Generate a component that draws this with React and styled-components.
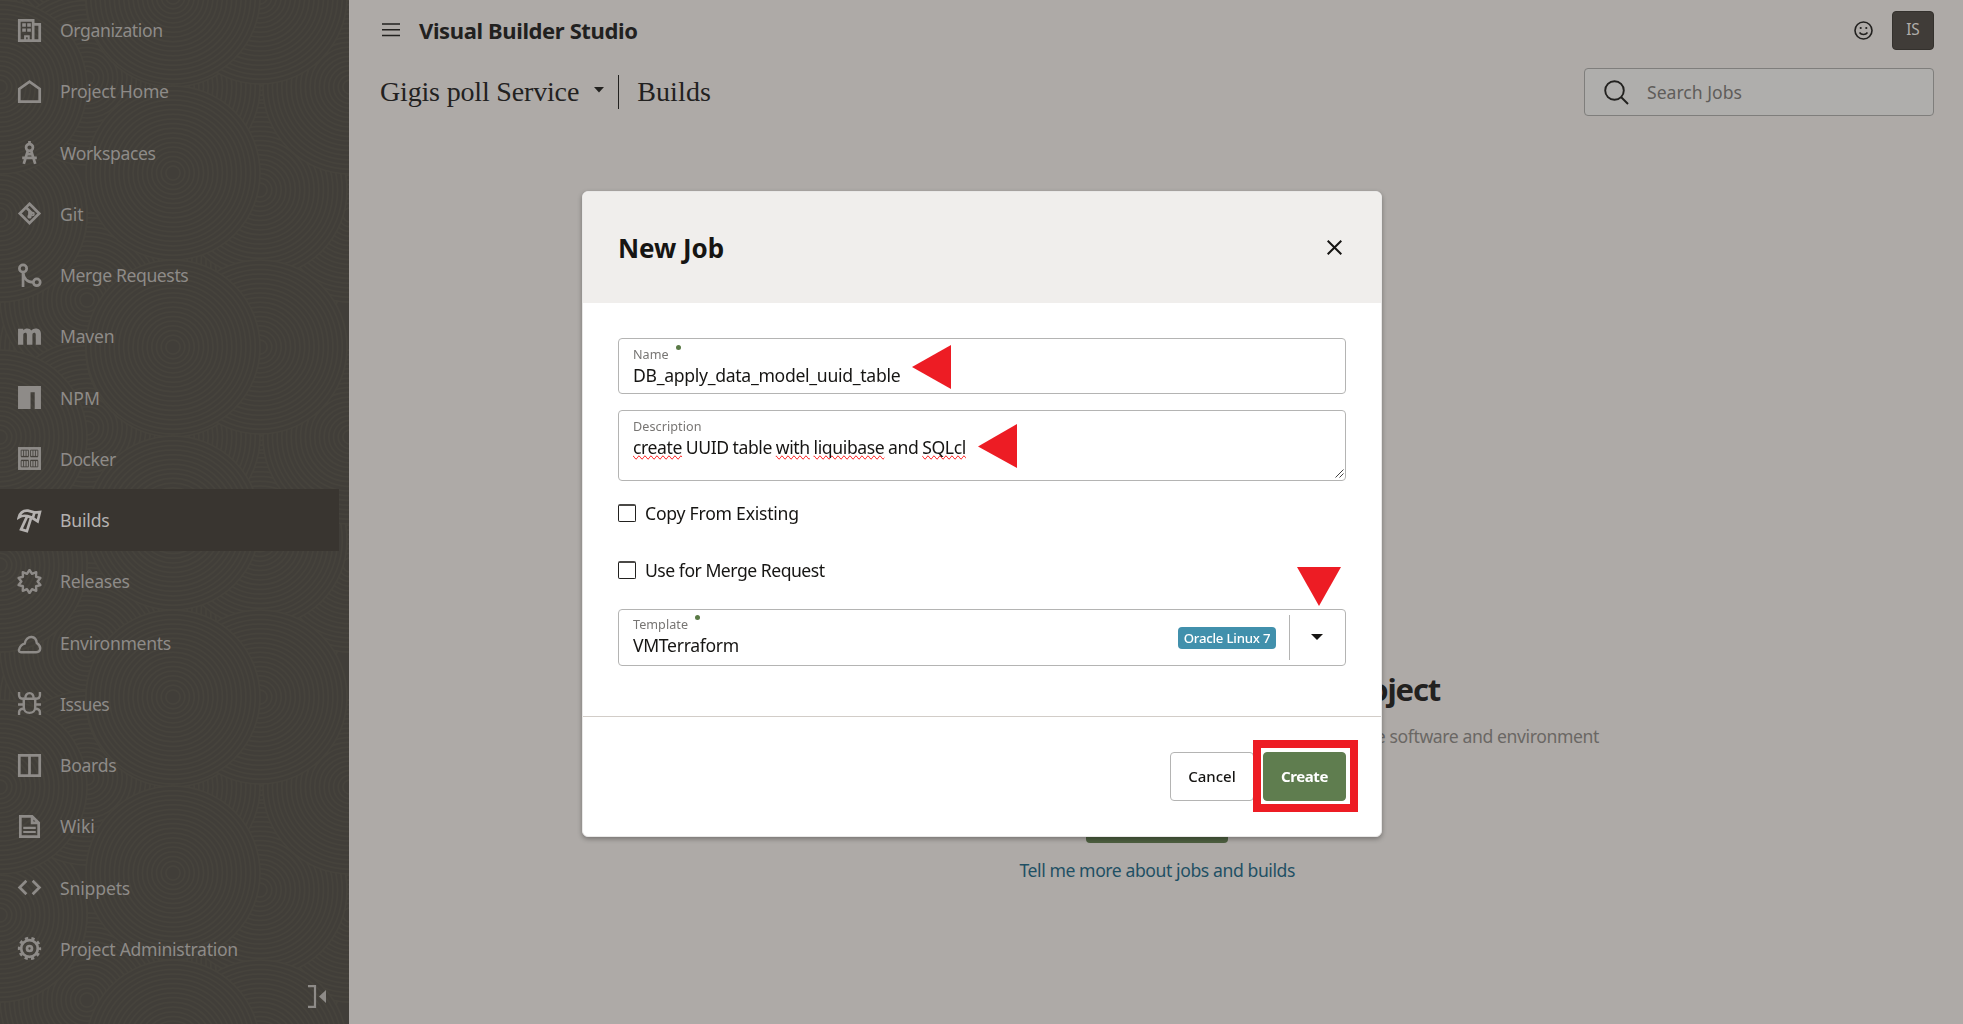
import React from "react";
import styled, { createGlobalStyle } from "styled-components";

const SANS = `"Noto Sans", "Open Sans", sans-serif`;
const SERIF = `"Liberation Serif", Georgia, serif`;

const GlobalStyle = createGlobalStyle`
  * { box-sizing: border-box; }
  html, body { margin: 0; height: 100%; }
  body { font-family: ${SANS}; font-size: 17.6px; background: #aeaaa7; overflow: hidden; }
`;

const Page = styled.div`
  display: flex;
  width: 100vw;
  height: 100vh;
`;

/* Text run with optional tracking */
const T = styled.span`
  letter-spacing: ${(p) => p.$ls || 0}px;
  word-spacing: ${(p) => p.$ws || 0}px;
  white-space: nowrap;
`;

/* ---------- Sidebar ---------- */
const Sidebar = styled.nav`
  position: relative;
  flex: 0 0 349px;
  height: 100%;
  background: #413e39;
  display: flex;
  flex-direction: column;
  overflow: hidden;
`;
const Pattern = styled.svg`
  position: absolute;
  inset: 0;
  width: 100%;
  height: 100%;
`;
const NavList = styled.div`
  display: flex;
  flex-direction: column;
  margin-top: -0.4px;
`;
const NavItem = styled.a`
  position: relative;
  flex: 0 0 61.24px;
  width: 339px;
  display: flex;
  align-items: center;
  gap: 18px;
  padding-left: 17px;
  color: ${(p) => (p.$active ? "#b5b2b0" : "#8e8b88")};
  background: ${(p) => (p.$active ? "#393530" : "transparent")};
  line-height: 24px;
`;
const NavIcon = styled.svg`
  width: 25px;
  height: 25px;
  flex: none;
  fill: none;
  stroke: currentColor;
  stroke-width: 2.6;
`;
const Collapse = styled.div`
  position: relative;
  display: flex;
  justify-content: flex-end;
  padding: 6px 23px 0 0;
  color: #8e8b88;
`;

/* ---------- Main ---------- */
const Main = styled.main`
  flex: 1;
  display: flex;
  flex-direction: column;
  color: #22211f;
`;
const TopBar = styled.header`
  display: flex;
  align-items: center;
  height: 60px;
  padding: 0 29px 0 33px;
`;
const Brand = styled.h1`
  flex: 1;
  margin: 0 0 0 19px;
  font-size: 22px;
  line-height: 30px;
  font-weight: 700;
`;
const Avatar = styled.div`
  width: 42px;
  height: 39px;
  margin-left: 19px;
  border-radius: 4px;
  background: #403c38;
  border: 1px solid #34312d;
  color: #b0adaa;
  font-size: 15.4px;
  display: flex;
  align-items: center;
  justify-content: center;
  padding-bottom: 2px;
`;
const SubBar = styled.div`
  display: flex;
  align-items: center;
  height: 64px;
  padding: 0 29px 0 31px;
`;
const Crumb = styled.div`
  font-family: ${SERIF};
  font-size: 28px;
  line-height: 34px;
  white-space: nowrap;
`;
const CrumbCaret = styled.svg`
  margin: -4px 0 0 14px;
  width: 12px;
  height: 6px;
`;
const CrumbRule = styled.div`
  width: 1px;
  height: 34px;
  margin: 0 18px 0 13px;
  background: #22211f;
`;
const Search = styled.div`
  margin-left: auto;
  width: 350px;
  height: 48px;
  border: 1px solid #7f7e7c;
  border-radius: 4px;
  background: #afaeac;
  display: flex;
  align-items: center;
  padding-left: 19px;
  gap: 18px;
  color: #5f5d5a;
`;
const Empty = styled.section`
  margin-top: 545px;
  width: 1250px;
  display: flex;
  flex-direction: column;
  align-items: flex-end;
`;
const EmptyTitle = styled.div`
  font-size: 31px;
  font-weight: 700;
  line-height: 40px;
  padding-right: 159px;
`;
const EmptyText = styled.div`
  line-height: 24px;
  margin-top: 15px;
  color: #6a6764;
`;
const EmptyButton = styled.div`
  width: 142px;
  height: 48px;
  margin: 47px 371px 0 0;
  border-radius: 4px;
  background: #4d5f40;
`;
const EmptyLink = styled.a`
  margin: 15px 304px 0 0;
  line-height: 24px;
  color: #1f5064;
`;

/* ---------- Dialog ---------- */
const Layer = styled.div`
  position: fixed;
  inset: 0;
  padding: 191px 0 0 582px;
`;
const Dialog = styled.div`
  position: relative;
  width: 800px;
  height: 646px;
  border-radius: 6px;
  background: #fff;
  border: 1px solid #e9e8e7;
  box-shadow: 0 2px 5px rgba(0, 0, 0, 0.32);
  display: flex;
  flex-direction: column;
  color: #161513;
`;
const DialogHead = styled.div`
  height: 111px;
  background: #f0eeec;
  border-radius: 5px 5px 0 0;
  display: flex;
  align-items: center;
  justify-content: space-between;
  padding: 0 39px 0 35px;
`;
const DialogTitle = styled.h2`
  margin: 0;
  font-size: 26px;
  line-height: 36px;
  font-weight: 700;
`;
const DialogBody = styled.div`
  flex: 1;
  padding: 35px 35px 0;
  display: flex;
  flex-direction: column;
`;
const Field = styled.div`
  position: relative;
  height: ${(p) => p.$h}px;
  border: 1px solid #b4b4b3;
  border-radius: 4px;
  padding: 0 0 0 14px;
  margin-bottom: ${(p) => p.$mb || 0}px;
  display: flex;
  justify-content: space-between;
`;
const FieldText = styled.div`
  display: flex;
  flex-direction: column;
  padding-top: ${(p) => p.$pt}px;
`;
const Label = styled.div`
  display: flex;
  gap: 7px;
  font-size: 12.6px;
  line-height: 17px;
  color: #777573;
`;
const Required = styled.i`
  width: 5px;
  height: 5px;
  margin-top: -1px;
  border-radius: 50%;
  background: #5a7a46;
`;
const Value = styled.div`
  line-height: 24px;
`;
const Misspelled = styled.span`
  text-decoration: spelling-error;
`;
const Grip = styled.svg`
  position: absolute;
  right: 1px;
  bottom: 2px;
`;
const CheckRow = styled.label`
  display: flex;
  align-items: center;
  gap: 9px;
  height: 24px;
  margin-bottom: ${(p) => p.$mb}px;
`;
const Box = styled.span`
  width: 18px;
  height: 18px;
  border: 1px solid #22211f;
  border-top: 2px solid #4a4846;
  border-radius: 2px;
`;
const SelectEnd = styled.div`
  display: flex;
  align-items: center;
`;
const Badge = styled.span`
  width: 98px;
  height: 22px;
  border-radius: 4px;
  background: #4190ac;
  color: #fff;
  font-size: 13.2px;
  font-weight: 500;
  line-height: 22px;
  text-align: center;
`;
const SelectRule = styled.span`
  width: 1px;
  height: 45px;
  margin-left: 13px;
  background: #b4b4b3;
`;
const SelectCaret = styled.svg`
  width: 12px;
  height: 6px;
  margin: -2px 22px 0 21px;
`;
const DialogFoot = styled.div`
  height: 120px;
  border-top: 1px solid #d2cdc8;
  display: flex;
  justify-content: flex-end;
  gap: 9px;
  padding: 35px 35px 0 0;
`;
const Button = styled.button`
  width: ${(p) => (p.$primary ? 83 : 84)}px;
  height: 49px;
  padding: 0 0 2px;
  border-radius: 4px;
  border: 1px solid ${(p) => (p.$primary ? "#5f7d4f" : "#b4b4b3")};
  background: ${(p) => (p.$primary ? "#5f7d4f" : "#fff")};
  color: ${(p) => (p.$primary ? "#fff" : "#161513")};
  font-family: ${SANS};
  font-size: 15px;
  font-weight: ${(p) => (p.$primary ? 700 : 500)};
`;

/* ---------- Annotations drawn over the dialog ---------- */
const Mark = styled.svg`
  position: absolute;
  left: ${(p) => p.$x}px;
  top: ${(p) => p.$y}px;
  fill: #ed1c24;
`;
const Frame = styled.div`
  position: absolute;
  left: 670px;
  top: 548px;
  width: 105px;
  height: 72px;
  border: 8px solid #ed1c24;
`;

const hole = "#413e39";

const starPoints = (n, R, r) =>
  Array.from({ length: n * 2 }, (_, i) => {
    const a = (Math.PI * i) / n - Math.PI / 2;
    const d = i % 2 ? r : R;
    return `${(12 + d * Math.cos(a)).toFixed(2)},${(12 + d * Math.sin(a)).toFixed(2)}`;
  }).join(" ");

const icons = {
  org: (
    <>
      <path d="M2.200 2.200h13.300v19.600H2.200zM15.500 6.200h6.300v15.600h-6.300" />
      <path d="M7.800 22v-4.500h3.400V22" strokeWidth="2" />
      <path d="M5 5h3.500v3.300H5zM9.800 5h3.500v3.300H9.800zM5 10h3.500v3.300H5zM9.800 10h3.500v3.300H9.800z" fill="currentColor" stroke="none" />
    </>
  ),
  home: <path d="M2.200 21.800V9.500L12 2.500l9.800 7v12.300z" />,
  compass: (
    <>
      <circle cx="12" cy="7.200" r="3.300" />
      <path d="M12 1v3M10.500 10L6.500 23M13.500 10l4 13M5 17.200h14M10 13.500h4" />
    </>
  ),
  git: (
    <>
      <path d="M12 2.700L21.300 12 12 21.300 2.700 12z" />
      <path d="M9 6.500l6 6M12 9v6.500" />
      <circle cx="12" cy="14.800" r=".8" />
      <circle cx="15" cy="12.500" r=".8" />
    </>
  ),
  merge: (
    <>
      <circle cx="5.800" cy="5.200" r="3.500" />
      <circle cx="19" cy="18.500" r="3.300" />
      <path d="M5.800 9v14M5.800 9c.5 5.500 4 9.500 10 9.500" />
    </>
  ),
  npm: <path d="M1 1h22v22h-6V7h-4v16H1z" fill="currentColor" stroke="none" />,
  maven: (
    <path
      d="M1 4.500h5v1.600c1-1.300 2.300-1.900 4-1.900 1.800 0 3 .7 3.700 2 1-1.300 2.400-2 4.300-2 3.300 0 5 2 5 5.200V20h-5v-9.500c0-1.400-.5-2-1.500-2s-1.700.7-1.700 2V20H9.500v-9.500c0-1.400-.5-2-1.500-2S6 9.200 6 10.500V20H1z"
      fill="currentColor"
      stroke="none"
    />
  ),
  docker: (
    <>
      <path d="M1 1h22v22H1z" fill="currentColor" stroke="none" />
      <g stroke={hole} strokeWidth=".8">
        <path d="M4 4h7v6H4zM13 4h7v6h-7zM4 14h7v6H4zM13 14h7v6h-7zM6.300 4v6M8.700 4v6M15.300 4v6M17.700 4v6M6.300 14v6M8.700 14v6M15.300 14v6M17.700 14v6" />
      </g>
      <path d="M4 10.400h7M13 10.400h7M4 13.600h7M13 13.600h7" stroke={hole} strokeWidth="1" />
    </>
  ),
  hammer: (
    <>
      <path d="M1.800 9C3 4.600 6 2.200 10.500 2.600l6.300 1.700-1.600 5.200-5.200-1.700C7 7 4.500 7.400 1.800 9z" />
      <path d="M16.800 4.300l5.200-.4-2.200 8.900-4.900-3.200M9.600 8.300L3.900 20.500l5.600 1.700 4-12.600" />
    </>
  ),
  burst: <polygon points={starPoints(10, 11, 7.8)} strokeWidth="2.300" strokeLinejoin="round" />,
  cloud: <path d="M3.500 21.300C1.700 21 1.500 19.500 2.200 18c1-2.800 2.500-4.300 5.200-5C8 9 11 6.500 14 6.700c3 .2 4.600 2.300 5 5.800 2.300 1.600 3.500 3.500 3.300 5.500-.2 2.200-1.600 3.300-3.900 3.300z" strokeWidth="2.300" />,
  bug: (
    <g strokeWidth="2.300">
      <path d="M6.500 7.500h11v8c0 3.500-2.500 5.500-5.500 5.500s-5.500-2-5.500-5.500zM8 7.500C8 4 9.500 2 12 2s4 2 4 5.500" />
      <path d="M2 1v3c0 2.500 2 3.500 4.500 3.500M22 1v3c0 2.500-2 3.500-4.500 3.500M1 13h5.500M17.500 13H23M2 23v-2.500C2 18 4 17 6.500 17M22 23v-2.500c0-2.500-2-3.500-4.500-3.500" />
    </g>
  ),
  board: <path d="M2.200 2.200h19.600v19.600H2.200zM12 2v20" />,
  wiki: (
    <>
      <path d="M3.200 2.200h11.300l6.300 6.300v13.300H3.200zM14.500 2v6.500h6" />
      <path d="M6 13.300h12M6 17.300h12" strokeWidth="2" />
    </>
  ),
  code: <path d="M9 5.500L2.500 12 9 18.500M15 5.500l6.500 6.500-6.500 6.500" />,
  gear: (
    <>
      <circle cx="12" cy="12" r="8" />
      <circle cx="12" cy="12" r="2.400" />
      <circle cx="12" cy="12" r="9.900" strokeDasharray="3.110 3.110" strokeDashoffset="1.550" />
    </>
  ),
};

const nav = [
  ["Organization", "org", -0.4],
  ["Project Home", "home", -0.28],
  ["Workspaces", "compass", -0.36],
  ["Git", "git", -0.07],
  ["Merge Requests", "merge", -0.4],
  ["Maven", "maven", -0.25],
  ["NPM", "npm", 0],
  ["Docker", "docker", -0.45],
  ["Builds", "hammer", -0.19],
  ["Releases", "burst", -0.28],
  ["Environments", "cloud", -0.3],
  ["Issues", "bug", -0.45],
  ["Boards", "board", -0.3],
  ["Wiki", "wiki", 0],
  ["Snippets", "code", -0.16],
  ["Project Administration", "gear", -0.3],
];

/* Overlapping discs of concentric rings, in paint order, on a 350px tile */
const discs = [
  [260, 60], [87, 0], [260, 262], [87, 300], [350, 215], [0, 215],
  [260, 190], [173, 87], [87, 78], [350, 87], [173, 0], [173, 173], [260, 347], [173, 347],
];
const rings = [87, 82.3, 77.6, 72.9, 68.2, 63.5, 58.8, 54.1, 49.4, 44.7, 40, 35.3, 30.6, 25.9, 21.2, 16.5, 11.8, 7.1];

function Swirls() {
  return (
    <Pattern aria-hidden="true">
      <defs>
        <g id="disc" stroke="#46433c" strokeWidth="1.500" fill="#413e39">
          {rings.map((r) => (
            <circle key={r} r={r} />
          ))}
        </g>
        <pattern id="swirl" width="350" height="350" patternUnits="userSpaceOnUse">
          {discs.map(([x, y]) =>
            [-350, 0, 350].map((dx) =>
              [-350, 0, 350].map((dy) => <use key={`${x}.${y}.${dx}.${dy}`} href="#disc" x={x + dx} y={y + dy} />)
            )
          )}
        </pattern>
      </defs>
      <rect width="100%" height="100%" fill="url(#swirl)" />
    </Pattern>
  );
}

export default function App() {
  return (
    <Page>
      <GlobalStyle />
      <Sidebar>
        <Swirls />
        <NavList>
          {nav.map(([label, icon, ls]) => (
            <NavItem key={label} $active={label === "Builds"}>
              <NavIcon viewBox="0 0 24 24">{icons[icon]}</NavIcon>
              <T $ls={ls}>{label}</T>
            </NavItem>
          ))}
        </NavList>
        <Collapse>
          <svg width="18" height="23" viewBox="0 0 18 23" fill="none" stroke="currentColor" strokeWidth="2.200">
            <path d="M0 1.200h7v20.600H0" />
            <path d="M18 5v13l-7-6.500z" fill="currentColor" stroke="none" />
          </svg>
        </Collapse>
      </Sidebar>

      <Main>
        <TopBar>
          <svg width="18" height="14" viewBox="0 0 18 14" stroke="#22211f" strokeWidth="1.600">
            <path d="M0 1h18M0 6.700h18M0 12.500h18" />
          </svg>
          <Brand><T $ls={-0.38}>Visual Builder Studio</T></Brand>
          <svg width="19" height="19" viewBox="0 0 19 19" fill="none" stroke="#22211f" strokeWidth="1.600">
            <circle cx="9.500" cy="9.500" r="8.500" />
            <path d="M5.500 11.500c1 1.400 2.300 2 4 2s3-.6 4-2" />
            <circle cx="6.700" cy="7" r="1.100" fill="#22211f" stroke="none" />
            <circle cx="12.300" cy="7" r="1.100" fill="#22211f" stroke="none" />
          </svg>
          <Avatar><T>IS</T></Avatar>
        </TopBar>
        <SubBar>
          <Crumb><T $ls={-0.17}>Gigis poll Service</T></Crumb>
          <CrumbCaret viewBox="0 0 12 6"><path d="M1 0h10L6 5.500z" fill="#22211f" /></CrumbCaret>
          <CrumbRule />
          <Crumb><T $ls={0.15}>Builds</T></Crumb>
          <Search>
            <svg width="25" height="25" viewBox="0 0 25 25" fill="none" stroke="#22211f" strokeWidth="1.900">
              <circle cx="10.500" cy="10.500" r="9.300" />
              <path d="M17 17l7 7" />
            </svg>
            <T>Search Jobs</T>
          </Search>
        </SubBar>
        <Empty>
          <EmptyTitle><T $ls={-1.18}>Create a Build Job for This Project</T></EmptyTitle>
          <EmptyText><T $ls={-0.4}>Create jobs to configure the software and environment</T></EmptyText>
          <EmptyButton />
          <EmptyLink><T $ls={-0.42}>Tell me more about jobs and builds</T></EmptyLink>
        </Empty>
      </Main>

      <Layer>
        <Dialog role="dialog">
          <DialogHead>
            <DialogTitle><T $ls={-0.06}>New Job</T></DialogTitle>
            <svg width="15" height="15" viewBox="0 0 15 15" stroke="#161513" strokeWidth="2">
              <path d="M.7.7l13.600 13.600M14.300.7L.7 14.300" />
            </svg>
          </DialogHead>
          <DialogBody>
            <Field $h={56} $mb={16}>
              <FieldText $pt={7}>
                <Label><T $ls={0.05}>Name</T><Required /></Label>
                <Value><T $ls={-0.3}>DB_apply_data_model_uuid_table</T></Value>
              </FieldText>
            </Field>
            <Field $h={71} $mb={20}>
              <FieldText $pt={7}>
                <Label><T $ls={0.07}>Description</T></Label>
                <Value>
                  <T $ls={-0.4} $ws={-0.4}>
                    <Misspelled>create</Misspelled> UUID table <Misspelled>with</Misspelled>{" "}
                    <Misspelled>liquibase</Misspelled> and <Misspelled>SQLcl</Misspelled>
                  </T>
                </Value>
              </FieldText>
              <Grip width="9" height="9" viewBox="0 0 9 9" stroke="#444" strokeWidth="1">
                <path d="M.5 8.500l8-8M4.500 8.500l4-4" />
              </Grip>
            </Field>
            <CheckRow $mb={33}><Box /><T $ls={-0.24}>Copy From Existing</T></CheckRow>
            <CheckRow $mb={27}><Box /><T $ls={-0.49}>Use for Merge Request</T></CheckRow>
            <Field $h={57}>
              <FieldText $pt={6}>
                <Label><T $ls={0.04}>Template</T><Required /></Label>
                <Value><T $ls={-0.32}>VMTerraform</T></Value>
              </FieldText>
              <SelectEnd>
                <Badge><T $ls={-0.2}>Oracle Linux 7</T></Badge>
                <SelectRule />
                <SelectCaret viewBox="0 0 12 6"><path d="M0 0h12L6 6z" fill="#161513" /></SelectCaret>
              </SelectEnd>
            </Field>
          </DialogBody>
          <DialogFoot>
            <Button><T $ls={0}>Cancel</T></Button>
            <Button $primary><T $ls={-0.41}>Create</T></Button>
          </DialogFoot>
          <Mark $x={329} $y={153} width="39" height="44" viewBox="0 0 39 44"><path d="M0 22L39 0v44z" /></Mark>
          <Mark $x={395} $y={232} width="39" height="44" viewBox="0 0 39 44"><path d="M0 22.500L39 0v44z" /></Mark>
          <Mark $x={714} $y={375} width="44" height="39" viewBox="0 0 44 39"><path d="M0 0h44L22 39z" /></Mark>
          <Frame />
        </Dialog>
      </Layer>
    </Page>
  );
}
